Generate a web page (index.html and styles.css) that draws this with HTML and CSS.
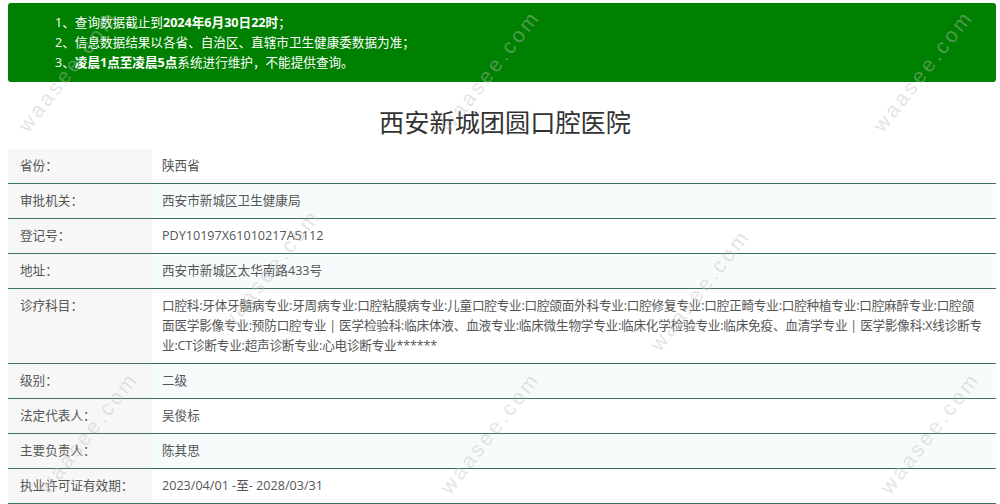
FILE: index.html
```html
<!DOCTYPE html>
<html lang="zh-CN">
<head>
<meta charset="utf-8">
<title>西安新城团圆口腔医院</title>
<link rel="stylesheet" href="styles.css">
</head>
<body>
<div class="page">
  <div class="notice">
    <div class="notice-line">1、查询数据截止到<b>2024年6月30日22时</b>；</div>
    <div class="notice-line">2、信息数据结果以各省、自治区、直辖市卫生健康委数据为准；</div>
    <div class="notice-line">3、<b>凌晨1点至凌晨5点</b>系统进行维护，不能提供查询。</div>
  </div>

  <h1 class="title">西安新城团圆口腔医院</h1>

  <div class="info">
    <div class="row"><div class="label">省份：</div><div class="value">陕西省</div></div>
    <div class="row"><div class="label">审批机关：</div><div class="value">西安市新城区卫生健康局</div></div>
    <div class="row"><div class="label">登记号：</div><div class="value">PDY10197X61010217A5112</div></div>
    <div class="row"><div class="label">地址：</div><div class="value">西安市新城区太华南路433号</div></div>
    <div class="row"><div class="label">诊疗科目：</div><div class="value value-long">口腔科:牙体牙髓病专业:牙周病专业:口腔粘膜病专业:儿童口腔专业:口腔颌面外科专业:口腔修复专业:口腔正畸专业:口腔种植专业:口腔麻醉专业:口腔颌面医学影像专业:预防口腔专业 | 医学检验科:临床体液、血液专业:临床微生物学专业:临床化学检验专业:临床免疫、血清学专业 | 医学影像科:X线诊断专业:CT诊断专业:超声诊断专业:心电诊断专业******</div></div>
    <div class="row"><div class="label">级别：</div><div class="value">二级</div></div>
    <div class="row"><div class="label">法定代表人：</div><div class="value">吴俊标</div></div>
    <div class="row"><div class="label">主要负责人：</div><div class="value">陈其思</div></div>
    <div class="row"><div class="label">执业许可证有效期：</div><div class="value">2023/04/01 -至- 2028/03/31</div></div>
  </div>

  <span class="wm wm1">waasee.com</span>
  <span class="wm wm2">waasee.com</span>
  <span class="wm wm3">waasee.com</span>
  <span class="wm wm4">waasee.com</span>
  <span class="wm wm5">waasee.com</span>
  <span class="wm wm6">waasee.com</span>
  <span class="wm wm7">waasee.com</span>
  <span class="wm wm8">waasee.com</span>
</div>
</body>
</html>
```

FILE: styles.css
```css
html, body {
  margin: 0;
  padding: 0;
  background: #ffffff;
}

body {
  font-family: "Open Sans", "Noto Sans CJK SC", sans-serif;
  font-size: 12.6px;
  color: #555555;
  height: 504px;
  overflow: hidden;
}

.page {
  position: relative;
  width: 988px;
  margin: 3px 0 0 8px;
}

.notice {
  background: #008000;
  border-radius: 3px;
  padding: 10px 0 9px 47px;
  color: #ffffff;
}

.notice-line {
  line-height: 20px;
}

.notice-line b {
  font-weight: 700;
}

.title {
  margin: 22px 0 9px 0;
  font-size: 25.2px;
  line-height: 36px;
  font-weight: 400;
  text-align: center;
  color: #333333;
  padding-left: 6px;
}

.info {
  display: flex;
  flex-direction: column;
}

.row {
  display: grid;
  grid-template-columns: 144px 1fr;
  border-bottom: 1px solid #3d7263;
  line-height: 20px;
}

.label {
  background: #f7f7f7;
  padding: 7px 0 7px 12px;
}

.value {
  padding: 7px 8px 7px 10px;
}

.value-long {
  padding-right: 12px;
  letter-spacing: -0.2px;
}

.row:nth-child(even) .value {
  background: #f6fbfc;
}

.wm {
  position: absolute;
  font-family: "Liberation Sans", sans-serif;
  font-size: 21px;
  letter-spacing: 3px;
  color: rgba(190, 190, 190, 0.42);
  transform: translate(-50%, -50%) rotate(-52deg);
  white-space: nowrap;
  pointer-events: none;
}

.wm1 { left: 60px;  top: 68px; }
.wm2 { left: 915px; top: 68px; }
.wm3 { left: 262px; top: 267px; }
.wm4 { left: 692px; top: 287px; }
.wm5 { left: 80px;  top: 430px; }
.wm6 { left: 482px; top: 430px; }
.wm7 { left: 922px; top: 430px; }
.wm8 { left: 482px; top: 68px; }
```
